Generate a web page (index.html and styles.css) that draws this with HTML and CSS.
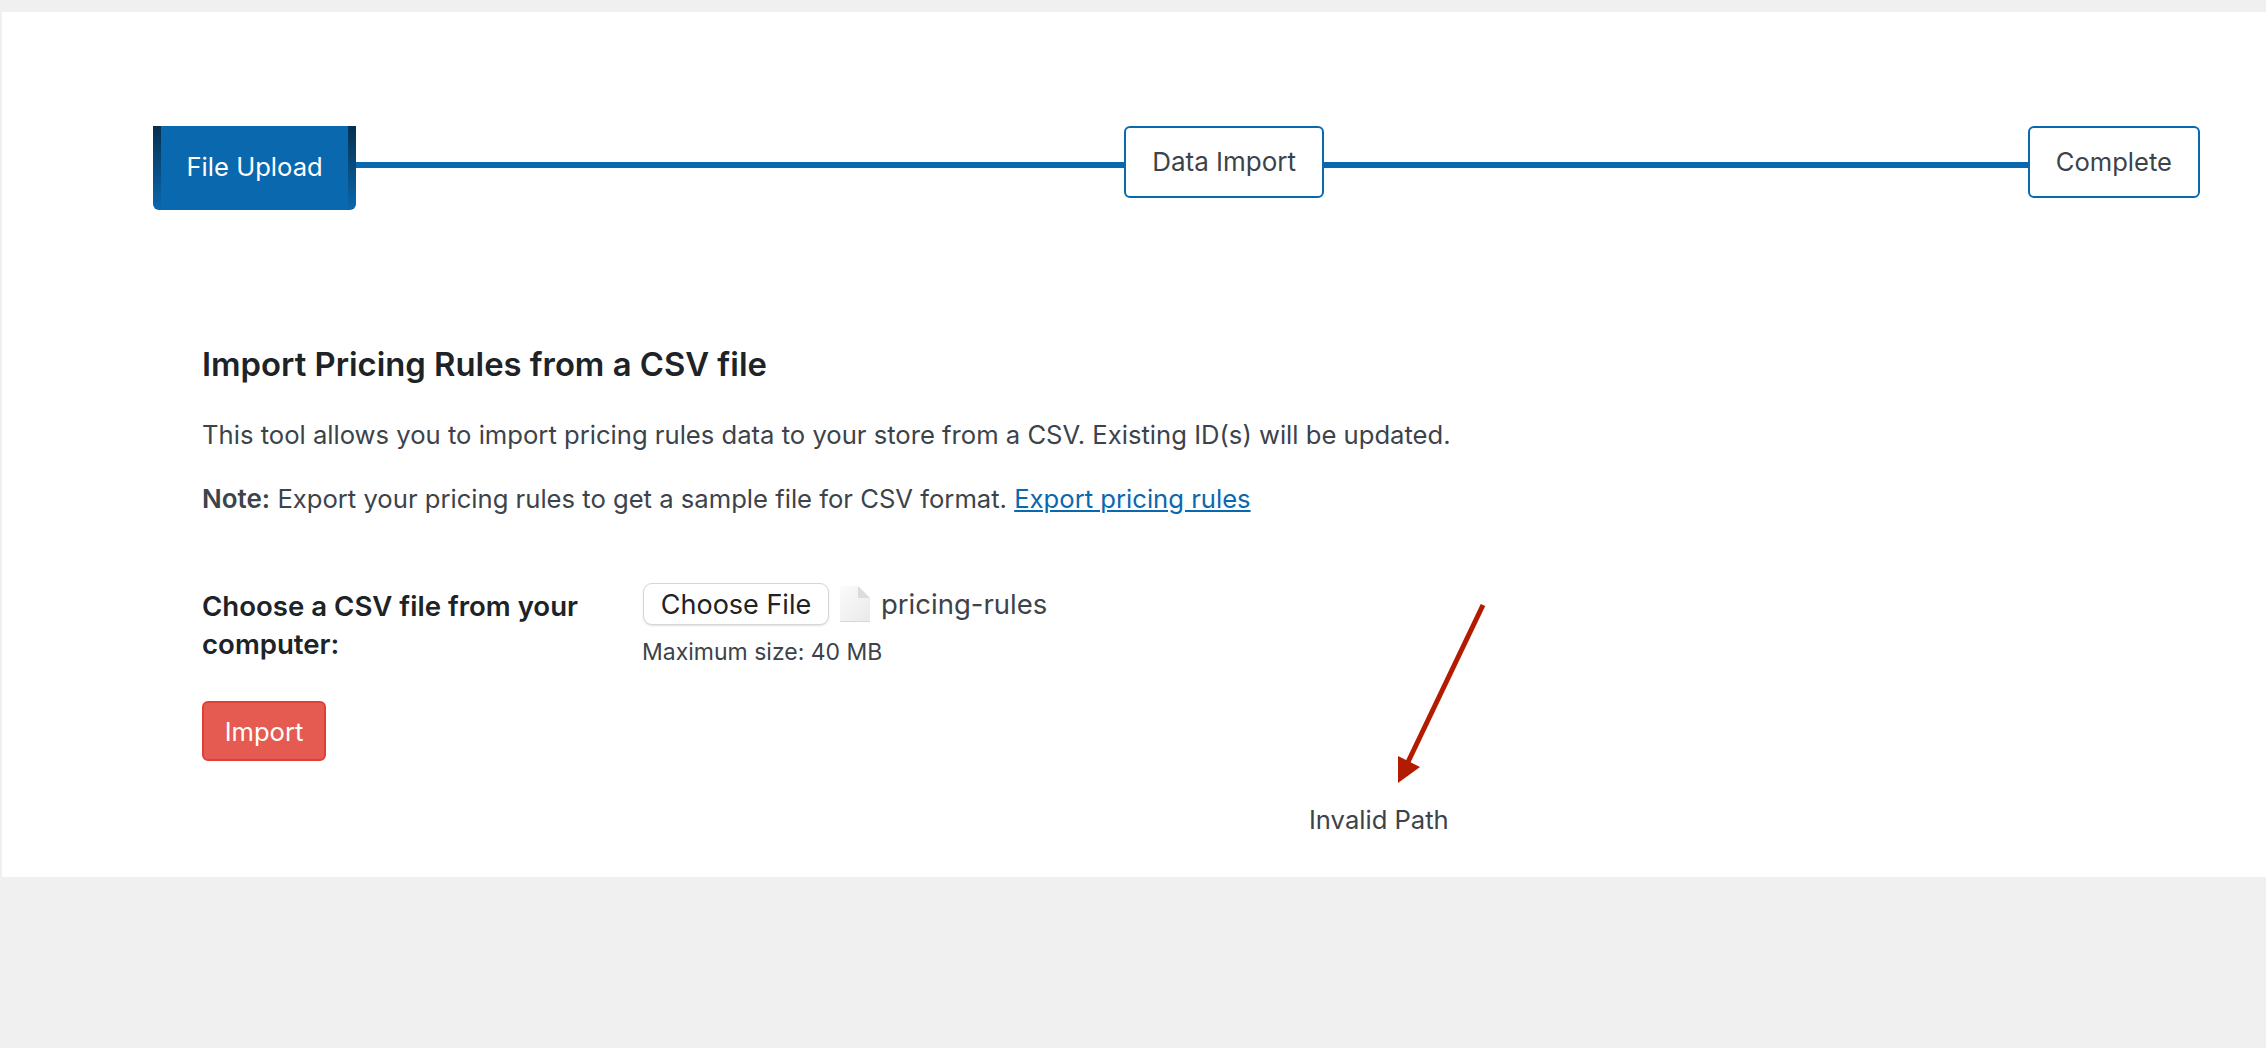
FILE: index.html
```html
<!DOCTYPE html>
<html lang="en">
<head>
  <meta charset="UTF-8" />
  <title>Import Pricing Rules</title>
  <link rel="stylesheet" href="styles.css">
</head>
<body>

  <div class="panel">

    <!-- Pasos del importador -->
    <div class="steps">
      <div class="step step-active">File Upload</div>
      <div class="step-line step-line-first"></div>
      <div class="step">Data Import</div>
      <div class="step-line"></div>
      <div class="step step-last">Complete</div>
    </div>

    <div class="content">
      <h2>Import Pricing Rules from a CSV file</h2>
      <p class="intro">This tool allows you to import pricing rules data to your store from a CSV. Existing ID(s) will be updated.</p>
      <p class="note"><strong>Note:</strong> Export your pricing rules to get a sample file for CSV format. <a href="#">Export pricing rules</a></p>

      <div class="file-row">
        <label class="file-label">Choose a CSV file from your computer:</label>
        <div class="file-field">
          <div class="file-picker">
            <button class="choose-btn">Choose File</button>
            <svg class="file-icon" width="30" height="36" viewBox="0 0 30 36">
              <defs>
                <linearGradient id="page" x1="0" y1="0" x2="1" y2="1">
                  <stop offset="0" stop-color="#fbfbfb" />
                  <stop offset="1" stop-color="#e9e9e9" />
                </linearGradient>
              </defs>
              <path d="M0 0H18L30 12V36H0Z" fill="url(#page)" />
              <path d="M18 0L30 12H18Z" fill="#dcdcdc" />
              <path d="M0 35H30V36H0Z" fill="#d8d8d8" />
            </svg>
            <span class="file-name">pricing-rules</span>
          </div>
          <small class="max-size">Maximum size: 40 MB</small>
        </div>
      </div>

      <button class="import-btn">Import</button>
    </div>

    <!-- Anotacion sobre la captura -->
    <svg class="arrow" width="100" height="190" viewBox="0 0 100 190">
      <path d="M92 2L17 159" stroke="#b31b00" stroke-width="5" fill="none" />
      <path d="M7 153V180L29 164Z" fill="#b31b00" />
    </svg>
    <span class="invalid-path">Invalid Path</span>
  </div>

</body>
</html>
```

FILE: styles.css
```css
body {
  margin: 0;
  font-family: Inter, "Noto Sans", sans-serif;
  background-color: #f0f0f0;
  color: #3c434a;
  height: 1048px;
  overflow: hidden;
}

.panel {
  position: relative;
  margin: 12px 0 0 2px;
  height: 865px;
  background-color: #ffffff;
  padding: 114px 66px 0 151px;
  box-sizing: border-box;
}

/* Pasos */
.steps {
  display: flex;
  align-items: flex-start;
}

.step {
  flex: none;
  box-sizing: border-box;
  height: 72px;
  padding: 0 26px 2px;
  display: flex;
  align-items: center;
  border: 2px solid #0a68ae;
  border-radius: 6px;
  background-color: #ffffff;
  font-size: 26px;
}

.step-active {
  height: 84px;
  padding: 0 33.5px 4px;
  border: none;
  border-radius: 0 0 6px 6px;
  font-size: 25.6px;
  color: #ffffff;
  background:
    linear-gradient(#04304f, #0a68ae) left top / 8px 100% no-repeat,
    linear-gradient(#04304f, #0a68ae) right top / 8px 100% no-repeat,
    #0a68ae;
}

.step-last {
  font-size: 25.6px;
}

.step-line {
  flex: 1;
  height: 6px;
  margin-top: 36px;
  background-color: #0a68ae;
}

.step-line-first {
  flex: none;
  width: 768px;
}

/* Contenido */
.content {
  padding: 134px 0 0 49px;
}

h2 {
  margin: 0;
  font-size: 32.8px;
  line-height: 40px;
  font-weight: 600;
  color: #1d2327;
}

.intro,
.note {
  margin: 0;
  font-size: 25.63px;
  line-height: 36px;
}

.intro {
  margin-top: 33px;
}

.note {
  margin-top: 28px;
}

.note strong {
  font-weight: 600;
  font-size: 26px;
}

.note a {
  color: #0a68ae;
}

.file-row {
  display: flex;
  margin-top: 66px;
}

.file-label {
  flex: none;
  width: 440px;
  padding-top: 4px;
  font-size: 27.6px;
  line-height: 38px;
  font-weight: 600;
  color: #1d2327;
  box-sizing: border-box;
  padding-right: 60px;
}

.file-picker {
  display: flex;
  align-items: center;
  gap: 11px;
  margin-left: 1px;
}

.choose-btn {
  box-sizing: border-box;
  width: 186px;
  height: 42px;
  padding: 0;
  font-family: inherit;
  font-size: 27px;
  color: #222222;
  background-color: #ffffff;
  border: 1px solid #d6d6d6;
  border-radius: 9px;
  box-shadow: 0 1px 2px rgba(0, 0, 0, 0.12);
}

.file-name {
  font-size: 27.5px;
}

.max-size {
  display: block;
  margin-top: 12px;
  font-size: 23px;
  line-height: 30px;
}

.import-btn {
  display: block;
  box-sizing: border-box;
  width: 124px;
  height: 60px;
  margin-top: 34px;
  padding: 0;
  font-family: inherit;
  font-size: 25.6px;
  color: #ffffff;
  background-color: #e55b52;
  border: 2px solid #df3f35;
  border-radius: 6px;
}

/* Anotacion */
.arrow {
  position: absolute;
  left: 1389px;
  top: 591px;
}

.invalid-path {
  position: absolute;
  left: 1307px;
  top: 790px;
  font-size: 25.6px;
  line-height: 36px;
}
```
